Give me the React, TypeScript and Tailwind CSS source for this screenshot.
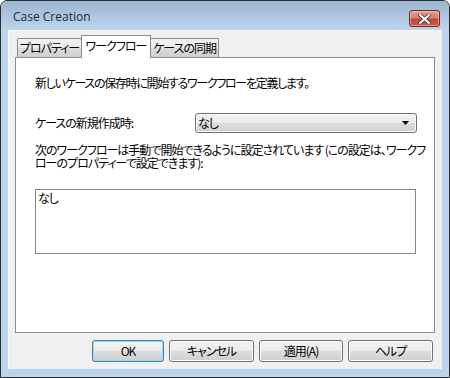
import React from "react";

const jp = "font-['MS_UI_Gothic','Noto_Sans_CJK_JP',sans-serif] [font-feature-settings:'palt'] tracking-[-1px] whitespace-nowrap";

function Btn({ label, w, focus }: { label: string; w: string; focus?: boolean }) {
  return (
    <div
      className={`${w} h-[22px] rounded-[3px] border ${
        focus ? "border-[#3c7fb1] shadow-[inset_0_0_0_1px_#9fd5f5]" : "border-[#707070] shadow-[inset_0_0_0_1px_#fbfbfb]"
      } bg-[linear-gradient(#f2f2f2_0%,#ebebeb_50%,#dddddd_51%,#cfcfcf_100%)] flex items-center justify-center text-[12px] leading-none text-black ${jp}`}
    >
      {label}
    </div>
  );
}

export default function App() {
  return (
    <div className="w-[450px] h-[378px] bg-white">
      <div className="w-[450px] h-[378px] border border-[#2e2e2e] rounded-t-[7px] bg-[#bcd4ee] flex flex-col overflow-hidden">
        {/* title bar */}
        <div className="h-[29px] shrink-0 bg-[linear-gradient(#9cb5d2,#b0c8e3_60%,#bcd4ee)] flex items-start relative">
          <div className="pl-[12px] pt-[9px] text-[12px] leading-[14px] text-[#1e2a44] font-['Segoe_UI','Open_Sans',sans-serif]">
            Case Creation
          </div>
          <div className="absolute left-[408px] top-[9px] w-[31px] h-[17px] rounded-[3px] border border-[#7a2418] bg-[linear-gradient(#e4a196_0%,#d6806f_45%,#c2493a_55%,#c6593f_100%)] shadow-[inset_0_0_0_1px_rgba(255,200,190,0.6)] flex items-center justify-center">
            <svg width="13" height="10" viewBox="0 0 13 10">
              <path d="M2 1 L11 9 M11 1 L2 9" stroke="#3c3c3c" strokeWidth="3.6" strokeLinecap="square" />
              <path d="M2 1 L11 9 M11 1 L2 9" stroke="#ffffff" strokeWidth="2" strokeLinecap="square" />
            </svg>
          </div>
        </div>

        {/* client */}
        <div className="mx-[7px] h-[339px] shrink-0 bg-[#f0f0f0] border-l border-t border-[#f8fbfe] flex flex-col">
          {/* tabs */}
          <div className="h-[26px] pl-[8px] flex items-end relative z-10">
            <div className={`w-[65px] h-[19px] border border-[#898c95] border-b-0 rounded-t-[2px] bg-[linear-gradient(#f2f2f2,#ebebeb_50%,#dddddd_51%,#cfcfcf)] text-[12px] leading-[18px] text-center text-black ${jp}`}>
              プロパティー
            </div>
            <div className={`w-[70px] border border-[#898c95] border-b-0 -ml-px bg-white text-[12px] leading-[20px] text-center text-black -mb-px h-[23px] ${jp}`}>
              ワークフロー
            </div>
            <div className={`w-[69px] h-[19px] border border-[#898c95] border-b-0 -ml-px rounded-t-[2px] bg-[linear-gradient(#f2f2f2,#ebebeb_50%,#dddddd_51%,#cfcfcf)] text-[12px] leading-[18px] text-center text-black ${jp}`}>
              ケースの同期
            </div>
          </div>

          {/* panel */}
          <div className={`ml-[6px] w-[420px] h-[276px] border border-[#898c95] bg-white flex flex-col pl-[19px] text-[12px] text-black ${jp}`}>
            <div className="mt-[18px] leading-[14px] tracking-[-1.3px]">
              新しいケースの保存時に開始するワークフローを定義します。
            </div>
            <div className="mt-[23px] flex items-center h-[20px]">
              <div className="w-[160px] leading-[14px]">ケースの新規作成時:</div>
              <div className="w-[222px] h-[20px] rounded-[3px] border border-[#707070] shadow-[inset_0_0_0_1px_#fbfbfb] bg-[linear-gradient(#f2f2f2_0%,#ebebeb_50%,#dddddd_51%,#cfcfcf_100%)] flex items-center justify-between pl-[2px] pr-[7px]">
                <span className="leading-[14px]">なし</span>
                <svg width="7" height="4" viewBox="0 0 7 4">
                  <path d="M0 0 H7 L3.5 4 Z" fill="#000" />
                </svg>
              </div>
            </div>
            <div className="mt-[10px] leading-[13px]">
              次のワークフローは手動で開始できるように設定されています (この設定は、ワークフ
              <br />
              ローのプロパティーで設定できます):
            </div>
            <div className="mt-[20px] w-[381px] h-[65px] border border-[#828790] bg-white px-[2px] pt-[1px] leading-[14px]">
              なし
            </div>
          </div>

          {/* buttons */}
          <div className="mt-[7px] flex gap-[5px] pl-[83px]">
            <Btn label="OK" w="w-[72px]" focus />
            <Btn label="キャンセル" w="w-[85px]" />
            <Btn label="適用(A)" w="w-[84px]" />
            <Btn label="ヘルプ" w="w-[85px]" />
          </div>
        </div>
      </div>
    </div>
  );
}
